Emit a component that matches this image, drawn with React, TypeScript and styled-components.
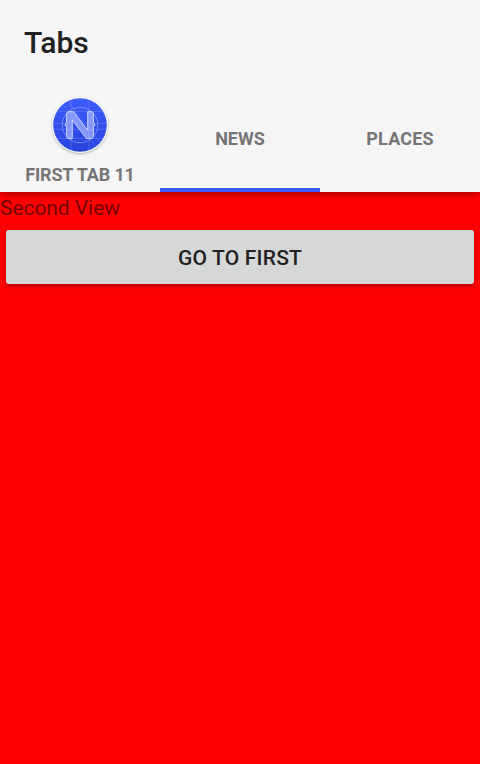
import React from "react";
import styled, { createGlobalStyle } from "styled-components";

const Global = createGlobalStyle`
  * { box-sizing: border-box; }
  body { margin: 0; background: #ff0000; font-family: Roboto, sans-serif; }
`;
const Screen = styled.div`
  display: flex;
  flex-direction: column;
  height: 764px;
  background: #ff0000;
`;
const Header = styled.header`
  height: 192px;
  background: #f5f5f5;
  box-shadow: 0 2px 7px rgba(0, 0, 0, 0.36);
`;
const Title = styled.h1`
  margin: 0;
  height: 84px;
  padding-left: 24px;
  line-height: 85px;
  font-size: 30px;
  font-weight: 500;
  color: #212121;
`;
const TabStrip = styled.nav`
  display: grid;
  grid-template-columns: repeat(3, 1fr);
  height: 108px;
`;
const Tab = styled.div<{ $selected?: boolean }>`
  display: flex;
  flex-direction: column;
  align-items: center;
  justify-content: center;
  padding-top: 6px;
  border-bottom: 4px solid ${(p) => (p.$selected ? "#3d5afe" : "transparent")};
`;
const TabLabel = styled.span<{ $spacing?: number }>`
  font-size: 18px;
  line-height: 24px;
  font-weight: 700;
  letter-spacing: ${(p) => p.$spacing ?? 0}px;
  color: #757575;
`;
const Logo = styled.svg`
  display: block;
  width: 72px;
  height: 72px;
  margin: -2px 0 2px;
  overflow: visible;
`;
const Content = styled.main`
  flex: 1;
  display: flex;
  flex-direction: column;
`;
const ViewLabel = styled.p`
  margin: 0;
  height: 32px;
  line-height: 32px;
  font-size: 21px;
  letter-spacing: -0.06px;
  color: #750000;
`;
const Button = styled.button`
  margin: 6px;
  height: 54px;
  padding: 2px 0 0;
  border: 0;
  border-radius: 3px;
  background: #d6d7d7;
  box-shadow: 0 2px 4px rgba(0, 0, 0, 0.3);
  font: 500 21px Roboto, sans-serif;
  letter-spacing: 0.2px;
  color: #212121;
`;

function NativeLogo() {
  return (
    <Logo viewBox="0 0 72 72" aria-hidden="true">
      <defs>
        <linearGradient id="disc" x1="0" y1="0" x2="0" y2="1">
          <stop offset="0" stopColor="#3c5cfb" />
          <stop offset="1" stopColor="#2843dc" />
        </linearGradient>
        <clipPath id="discClip">
          <circle cx="36" cy="36" r="26.8" />
        </clipPath>
        <filter id="discShadow" x="-20%" y="-20%" width="140%" height="140%">
          <feDropShadow dx="0" dy="1" stdDeviation="0.9" floodOpacity="0.32" />
        </filter>
      </defs>
      <circle cx="36" cy="36" r="28" fill="#f3f5ff" filter="url(#discShadow)" />
      <circle cx="36" cy="36" r="26.8" fill="url(#disc)" />
      <g clipPath="url(#discClip)" fill="none" stroke="#91a5ff" strokeWidth="0.6" opacity="0.5">
        <path d="M27 8V64M45 8V64" />
        <path d="M8 22.5H64M8 34.3H64M8 40.3H64M8 49.5H64" />
        <path d="M13 8L57 64M20 8L64 63" />
        <circle cx="36" cy="36" r="17.7" stroke="#b8c4ff" strokeWidth="1" />
      </g>
      <path
        d="M25 22.7H29.6L43.7 41.3V22.7H47.3Q49.4 22.7 49.4 25V33.7L51 36L49.4 38.3V47.3Q49.4 49.5 47 49.5H42.4L28.3 30.9V49.5H25Q22.6 49.5 22.6 47.3V38.3L21 36L22.6 33.7V25Q22.6 22.7 25 22.7Z"
        fill="#a5b2ff"
        fillOpacity="0.72"
        stroke="#d5dcff"
        strokeWidth="0.9"
        strokeLinejoin="round"
      />
    </Logo>
  );
}

export default function App() {
  return (
    <Screen>
      <Global />
      <Header>
        <Title>Tabs</Title>
        <TabStrip>
          <Tab>
            <NativeLogo />
            <TabLabel $spacing={-0.15}>FIRST TAB 11</TabLabel>
          </Tab>
          <Tab $selected>
            <TabLabel>NEWS</TabLabel>
          </Tab>
          <Tab>
            <TabLabel $spacing={0.15}>PLACES</TabLabel>
          </Tab>
        </TabStrip>
      </Header>
      <Content>
        <ViewLabel>Second View</ViewLabel>
        <Button>GO TO FIRST</Button>
      </Content>
    </Screen>
  );
}
